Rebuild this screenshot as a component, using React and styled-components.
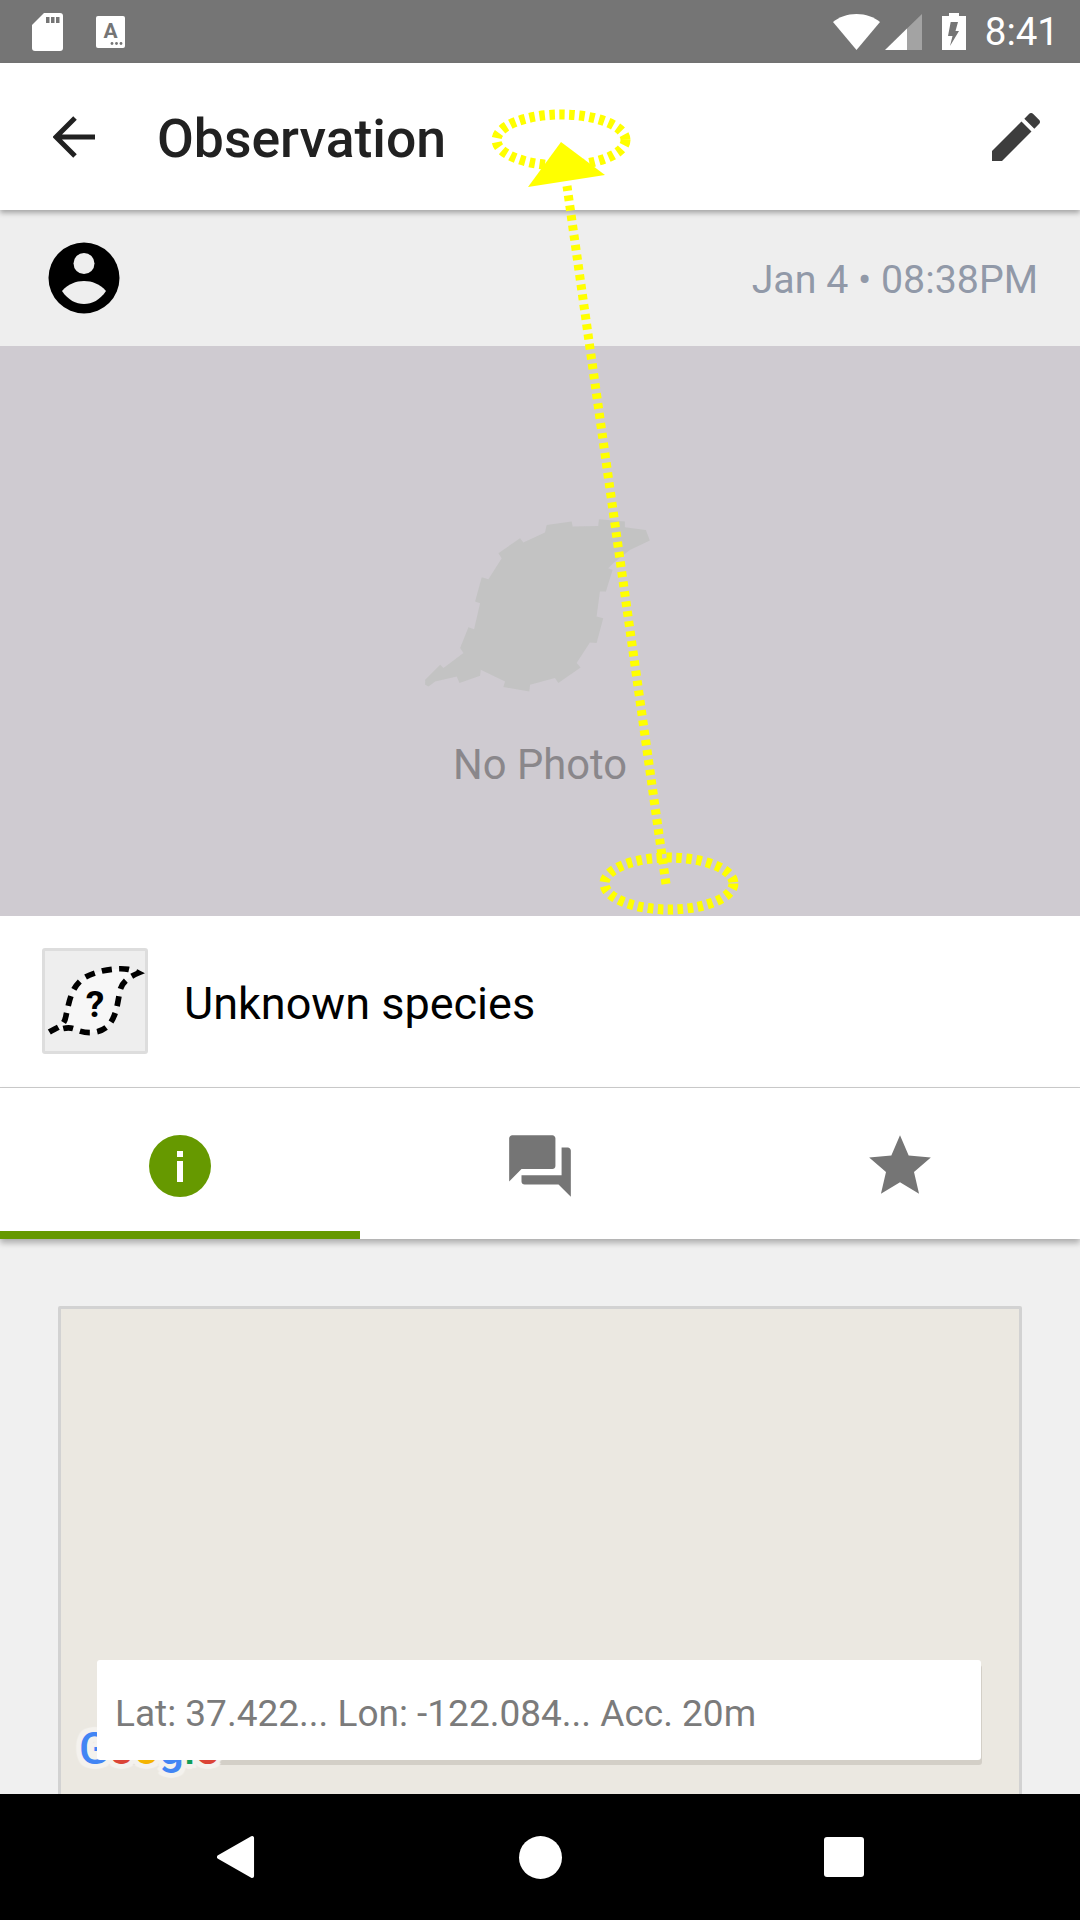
import React from 'react';
import styled, { createGlobalStyle } from 'styled-components';

const Global = createGlobalStyle`
  html, body { margin: 0; padding: 0; background: #000; }
  * { box-sizing: border-box; }
`;

const Screen = styled.div`
  position: relative;
  width: 1080px;
  height: 1920px;
  overflow: hidden;
  display: flex;
  flex-direction: column;
  background: #f0f0f0;
  font-family: Roboto, "Liberation Sans", sans-serif;
`;

const StatusBar = styled.div`
  height: 63px;
  flex: none;
  background: #757575;
  display: flex;
  align-items: center;
  justify-content: space-between;
  padding: 0 21px 0 32px;
`;
const StatusGroup = styled.div`
  display: flex;
  align-items: center;
  gap: ${p => p.$gap || 0}px;
`;
const Clock = styled.span`
  color: #fff;
  font-size: 38.5px;
  line-height: 63px;
  margin-left: 19px;
`;

const AppBar = styled.header`
  position: relative;
  z-index: 2;
  height: 147px;
  flex: none;
  background: #fff;
  box-shadow: 0 3px 5px rgba(0, 0, 0, 0.3);
  display: flex;
  align-items: center;
  padding: 0 40px 0 53px;
`;
const Title = styled.h1`
  margin: 4px 0 0 62px;
  flex: 1;
  font-size: 53.5px;
  font-weight: 500;
  color: #212121;
`;

const MetaRow = styled.div`
  height: 136px;
  flex: none;
  background: #eeeeee;
  display: flex;
  align-items: center;
  justify-content: space-between;
  padding: 0 42px 0 48px;
`;
const DateText = styled.span`
  font-size: 39.3px;
  color: #9199a8;
  margin-top: 4px;
`;

const Photo = styled.div`
  height: 570px;
  flex: none;
  background: #cfcbd1;
  display: flex;
  flex-direction: column;
  align-items: center;
  padding-top: 144px;
`;
const NoPhoto = styled.div`
  font-size: 41.7px;
  line-height: 48px;
  margin-top: 18px;
  color: #8a878b;
`;

const SpeciesRow = styled.div`
  height: 172px;
  flex: none;
  background: #fff;
  border-bottom: 1px solid #cccccc;
  display: flex;
  align-items: center;
  padding: 0 0 2px 42px;
`;
const SpeciesThumb = styled.div`
  width: 106px;
  height: 106px;
  background: #eeeeee;
  border: 3px solid #dddddd;
  border-radius: 3px;
  display: flex;
  align-items: center;
  justify-content: center;
`;
const SpeciesName = styled.span`
  margin: 5px 0 0 36px;
  font-size: 45px;
  color: #000;
`;

const Tabs = styled.nav`
  position: relative;
  z-index: 1;
  height: 151px;
  flex: none;
  background: #fff;
  box-shadow: 0 4px 6px rgba(0, 0, 0, 0.28);
  display: grid;
  grid-template-columns: repeat(3, 1fr);
`;
const Tab = styled.div`
  display: flex;
  align-items: flex-start;
  justify-content: center;
  padding-top: ${p => p.$pad}px;
  border-bottom: 8px solid ${p => (p.$active ? '#669900' : 'transparent')};
`;

const Content = styled.main`
  flex: 1;
  min-height: 0;
  overflow: hidden;
  padding: 67px 58px 0;
`;
const MapCard = styled.div`
  position: relative;
  height: 560px;
  background: #ebe8e1;
  border: 3px solid #d2d2d2;
  border-radius: 2px;
`;
const LocationShadow = styled.div`
  position: absolute;
  left: 36px;
  top: 356px;
  width: 885px;
  height: 100px;
  border-radius: 3px;
  background: #d3cfc7;
`;
const GoogleMark = styled.div`
  position: absolute;
  left: 18px;
  top: 413px;
  font-size: 44px;
  line-height: 54px;
  font-weight: 500;
  text-shadow: 5px 0 1px #f4f2ee, -5px 0 1px #f4f2ee, 0 5px 1px #f4f2ee, 0 -5px 1px #f4f2ee,
    4px 4px 1px #f4f2ee, -4px 4px 1px #f4f2ee, 4px -4px 1px #f4f2ee, -4px -4px 1px #f4f2ee;
`;
const Letter = styled.span`
  color: ${p => p.$c};
`;
const LocationCard = styled.div`
  position: absolute;
  left: 36px;
  top: 351px;
  width: 884px;
  height: 100px;
  background: #fff;
  border-radius: 3px;
  display: flex;
  align-items: center;
  padding: 6px 0 0 18px;
  font-size: 37px;
  color: #7b7b7b;
`;

const NavBar = styled.footer`
  position: relative;
  z-index: 3;
  height: 126px;
  flex: none;
  background: #000;
  display: grid;
  grid-template-columns: repeat(3, 304px);
  justify-content: center;
  align-items: center;
  justify-items: center;
`;
const NavCircle = styled.div`
  width: 43px;
  height: 43px;
  border-radius: 50%;
  background: #fff;
`;
const NavSquare = styled.div`
  width: 40px;
  height: 40px;
  border-radius: 3px;
  background: #fff;
`;

const Annotation = styled.svg`
  position: absolute;
  inset: 0;
  z-index: 5;
  pointer-events: none;
`;

const leaf = '75,570 120,525 130,535 190,490 180,475 205,412 222,418 240,340 225,335 245,262 265,268 305,205 295,190 360,145 370,158 435,128 440,105 515,95 518,110 595,108 597,88 675,95 675,112 738,120 750,152 690,180 640,220 625,235 638,240 618,305 600,305 590,380 610,385 590,460 570,458 530,520 542,533 475,580 465,565 390,585 388,605 310,592 315,575 242,540 240,558 178,580 170,560 105,575 85,590 75,585';
const thumbLeaf = 'M28 264C50 250 72 250 78 215 88 170 95 125 135 100 170 80 230 70 265 76 275 78 285 82 295 87 265 100 245 115 240 140 232 180 230 215 205 245 180 270 140 270 110 258 95 250 80 250 62 256';

export default function App() {
  return (
    <Screen>
      <Global />
      <StatusBar>
        <StatusGroup $gap={33}>
          <svg width="31" height="38" viewBox="0 0 31 38">
            <path fill="#fff" d="M12 0H28a3 3 0 0 1 3 3V35a3 3 0 0 1-3 3H3a3 3 0 0 1-3-3V12z" />
            <path fill="#757575" d="M14 4h3.5v6H14zM19 4h3.5v6H19zM24 4h3.5v6H24z" />
          </svg>
          <svg width="29" height="32" viewBox="0 0 29 32">
            <rect width="29" height="32" rx="2" fill="#fff" />
            <text x="14.5" y="22" textAnchor="middle" fontFamily="Roboto, sans-serif" fontWeight="700" fontSize="21" fill="#757575">A</text>
            <circle cx="16" cy="27.5" r="1.4" fill="#757575" />
            <circle cx="20.5" cy="27.5" r="1.4" fill="#757575" />
            <circle cx="25" cy="27.5" r="1.4" fill="#757575" />
          </svg>
        </StatusGroup>
        <StatusGroup>
          <svg width="47" height="36" viewBox="0 0 47 36" style={{ marginRight: 5 }}>
            <path fill="#fff" d="M0 8C6 3 14 0 23.5 0S41 3 47 8L23.5 36z" />
          </svg>
          <svg width="37" height="36" viewBox="0 0 37 36" style={{ marginRight: 20 }}>
            <path fill="#fff" d="M0 36L22 14.5V36z" />
            <path fill="#a3a3a3" d="M22 14.5L37 0V36H22z" />
          </svg>
          <svg width="24" height="37" viewBox="0 0 24 37">
            <path fill="#fff" d="M7 0h10v3h7v34H0V3h7z" />
            <path fill="#757575" d="M8.7 9H16L13.5 18H17L8 33L10.5 23H6z" />
          </svg>
          <Clock>8:41</Clock>
        </StatusGroup>
      </StatusBar>

      <AppBar>
        <svg width="42" height="42" viewBox="0 0 42 42">
          <path fill="none" stroke="#212121" strokeWidth="5" d="M22 2L3 21l19 19M3 21h39" />
        </svg>
        <Title>Observation</Title>
        <svg width="48" height="48" viewBox="3 3 18 18">
          <path fill="#3d3d3d" d="M3 17.25V21h3.75L17.81 9.94l-3.75-3.75L3 17.25zM20.71 7.04c.39-.39.39-1.02 0-1.41l-2.34-2.34c-.39-.39-1.02-.39-1.41 0l-1.83 1.83 3.75 3.75 1.83-1.83z" />
        </svg>
      </AppBar>

      <MetaRow>
        <svg width="72" height="72" viewBox="0 0 72 72">
          <circle cx="36" cy="36" r="35.5" fill="#000" />
          <circle cx="36" cy="21.5" r="10.5" fill="#eeeeee" />
          <path fill="#eeeeee" d="M14 49C20 42 28 39 36 39S52 42 58 49C52 58 44 62 36 62S20 58 14 49z" />
        </svg>
        <DateText>Jan 4 • 08:38PM</DateText>
      </MetaRow>

      <Photo>
        <svg width="280" height="233" viewBox="0 0 840 700">
          <polygon points={leaf} fill="#c3c3c3" />
        </svg>
        <NoPhoto>No Photo</NoPhoto>
      </Photo>

      <SpeciesRow>
        <SpeciesThumb>
          <svg width="100" height="100" viewBox="15 21 300 300">
            <path fill="#f7f7f7" stroke="none" d={thumbLeaf + 'z'} />
            <path fill="none" stroke="#000" strokeWidth="17" strokeDasharray="30 22" d={thumbLeaf} />
            <text x="165" y="220" textAnchor="middle" fontFamily="Roboto, sans-serif" fontWeight="700" fontSize="112" fill="#000">?</text>
          </svg>
        </SpeciesThumb>
        <SpeciesName>Unknown species</SpeciesName>
      </SpeciesRow>

      <Tabs>
        <Tab $active $pad={47}>
          <svg width="62" height="62" viewBox="0 0 62 62">
            <circle cx="31" cy="31" r="31" fill="#669900" />
            <path fill="#fff" d="M28 16h6v6h-6zM28 26h6v21h-6z" />
          </svg>
        </Tab>
        <Tab $pad={41}>
          <svg width="74" height="74" viewBox="0 0 24 24">
            <path fill="#757575" d="M21 6h-2v9H6v2c0 .55.45 1 1 1h11l4 4V7c0-.55-.45-1-1-1zm-4 6V3c0-.55-.45-1-1-1H3c-.55 0-1 .45-1 1v14l4-4h10c.55 0 1-.45 1-1z" />
          </svg>
        </Tab>
        <Tab $pad={41}>
          <svg width="74" height="74" viewBox="0 0 24 24">
            <path fill="#757575" d="M12 17.27L18.18 21l-1.64-7.03L22 9.24l-7.19-.61L12 2 9.19 8.63 2 9.24l5.46 4.73L5.82 21z" />
          </svg>
        </Tab>
      </Tabs>

      <Content>
        <MapCard>
          <LocationShadow />
          <GoogleMark>
            <Letter $c="#4285f4">G</Letter>
            <Letter $c="#db4437">o</Letter>
            <Letter $c="#f4b400">o</Letter>
            <Letter $c="#4285f4">g</Letter>
            <Letter $c="#0f9d58">l</Letter>
            <Letter $c="#db4437">e</Letter>
          </GoogleMark>
          <LocationCard>Lat: 37.422... Lon: -122.084... Acc. 20m</LocationCard>
        </MapCard>
      </Content>

      <NavBar>
        <svg width="38" height="42" viewBox="0 0 40 44">
          <path fill="#fff" stroke="#fff" strokeWidth="4" strokeLinejoin="round" d="M2 22L37 2V42z" />
        </svg>
        <NavCircle />
        <NavSquare />
      </NavBar>

      <Annotation width="1080" height="1920" viewBox="0 0 1080 1920">
        <g fill="none" stroke="#ffff00" strokeDasharray="5.5 4.5">
          <ellipse cx="561" cy="140" rx="64.5" ry="25.5" strokeWidth="10" />
          <ellipse cx="669" cy="883.5" rx="64.5" ry="26" strokeWidth="10" />
          <path d="M666 884L567 186" strokeWidth="9" />
        </g>
        <polygon points="561,142 605,175 528,187" fill="#ffff00" />
      </Annotation>
    </Screen>
  );
}
